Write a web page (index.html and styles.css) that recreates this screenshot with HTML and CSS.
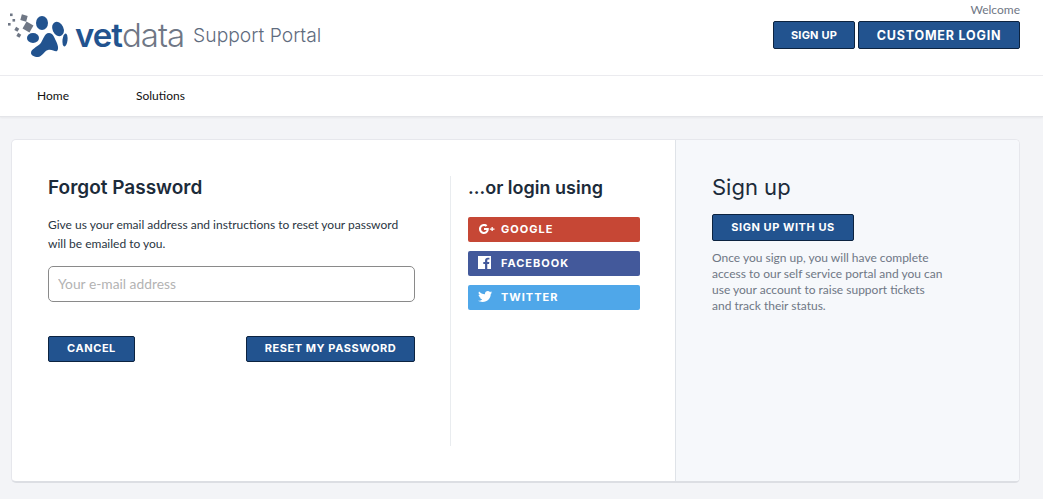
FILE: index.html
```html
<!DOCTYPE html>
<html>
<head lang="en">
  <meta charset="UTF-8">
  <title>Support Portal</title>
  <link rel="stylesheet" href="styles.css">
</head>
<body>
<div class="header">
  <div class="brand">
    <svg class="paw" width="62" height="48" viewBox="0 0 62 48">
      <g fill="#6f7785">
        <rect x="14" y="3" width="6" height="6" transform="rotate(15 17 6)"/>
        <rect x="3" y="1.500" width="2.600" height="2.600"/>
        <rect x="5.500" y="7" width="2.600" height="2.600"/>
        <rect x="1" y="11" width="2.600" height="2.600"/>
        <rect x="17" y="11" width="8" height="8" transform="rotate(30 21 15)"/>
        <rect x="8" y="15.500" width="3.600" height="3.600" transform="rotate(30 9.800 17.300)"/>
        <rect x="10" y="21.500" width="3.600" height="3.600" transform="rotate(30 11.800 23.300)"/>
      </g>
      <g fill="#22538f">
        <ellipse cx="35" cy="11" rx="6" ry="7"/>
        <ellipse cx="51" cy="17" rx="5.500" ry="7.500" transform="rotate(-25 51 17)"/>
        <ellipse cx="58" cy="28" rx="2.500" ry="6.500" transform="rotate(6 58 28)"/>
        <ellipse cx="26" cy="26" rx="6" ry="5"/>
        <path d="M42 21c4 0 5 4 7 8 2 4 3 8 1 10-2 1-5-2-9-1-4 1-6 7-10 7-4 0-7-2-7-4 0-4 6-6 9-9 3-3 4-11 9-11z"/>
      </g>
    </svg>
    <span class="logo-word"><b>vet</b>data</span>
    <span class="portal">Support Portal</span>
  </div>
  <div class="account">
    <div class="welcome">Welcome</div>
    <div class="account-btns">
      <a class="btn btn-small" href="#">SIGN UP</a>
      <a class="btn btn-large" href="#">CUSTOMER LOGIN</a>
    </div>
  </div>
</div>

<ul class="nav">
  <li><a href="#">Home</a></li>
  <li><a href="#">Solutions</a></li>
</ul>

<div class="card">
  <div class="main">
    <div class="forgot">
      <h2>Forgot Password</h2>
      <p>Give us your email address and instructions to reset your password will be emailed to you.</p>
      <input class="email" type="text" placeholder="Your e-mail address">
      <div class="form-btns">
        <a class="btn btn-cancel" href="#">CANCEL</a>
        <a class="btn btn-reset" href="#">RESET MY PASSWORD</a>
      </div>
    </div>
    <div class="social">
      <h2>…or login using</h2>
      <a class="soc google" href="#">
        <svg width="18" height="12" viewBox="0 0 18 12" preserveAspectRatio="xMinYMid"><path fill="#fff" d="M6 1c1.500 0 2.600.5 3.400 1.300L7.800 3.800C7.400 3.400 6.800 3.100 6 3.100 4.400 3.100 3.100 4.400 3.100 6S4.400 8.900 6 8.900c1.500 0 2.300-.8 2.600-1.900H6V5h4.800c.2 2.900-1.300 6-4.800 6-2.800 0-5-2.200-5-5s2.200-5 5-5z"/><path fill="#fff" d="M13.500 4.700h1.300V6h1.700v1.300h-1.700v1.300h-1.300V7.300h-1.700V6h1.700z" transform="translate(0 -.6)"/></svg>
        GOOGLE
      </a>
      <a class="soc facebook" href="#">
        <svg width="18" height="13" viewBox="0 0 14 14" preserveAspectRatio="xMinYMid"><path fill="#fff" d="M0 0h14v14h-4V8.600h1.900l.3-2.200H10V5c0-.7.200-1.100 1.100-1.100h1.200v-2C12 1.900 11.400 1.800 10.500 1.800 8.800 1.800 7.600 2.900 7.600 4.800v1.600H5.700v2.200h1.900V14H0z"/></svg>
        FACEBOOK
      </a>
      <a class="soc twitter" href="#">
        <svg width="18" height="11" viewBox="0 0 18 14" preserveAspectRatio="xMinYMid"><path fill="#fff" d="M18 1.700c-.7.300-1.400.5-2.100.6.800-.5 1.300-1.200 1.600-2-.7.400-1.500.7-2.300.9C14.500.4 13.500 0 12.500 0c-2 0-3.700 1.600-3.700 3.700 0 .3 0 .6.100.8C5.800 4.300 3.100 2.800 1.300.6.900 1.200.800 1.800.800 2.500c0 1.300.7 2.400 1.600 3-.6 0-1.200-.2-1.700-.5 0 1.800 1.300 3.300 3 3.600-.6.200-1.100.2-1.700.1.500 1.500 1.800 2.500 3.400 2.600C4 13 2 13.600 0 13.400 1.600 14.400 3.600 15 5.700 15 12.500 15 16.200 9.400 16.200 4.500v-.5c.7-.6 1.300-1.300 1.800-2.300z" transform="scale(1 .93)"/></svg>
        TWITTER
      </a>
    </div>
  </div>
  <div class="aside">
    <h3>Sign up</h3>
    <a class="btn btn-signup" href="#">SIGN UP WITH US</a>
    <p>Once you sign up, you will have complete access to our self service portal and you can use your account to raise support tickets and track their status.</p>
  </div>
</div>
</body>
</html>
```

FILE: styles.css
```css
* {
  margin: 0;
  padding: 0;
  box-sizing: border-box;
}

ul {
  list-style: none;
}

a {
  text-decoration: none;
}

body {
  background-color: #f3f4f7;
  font-family: Lato, "Noto Sans", sans-serif;
  overflow: hidden;
}

.header {
  height: 76px;
  background-color: #fff;
  border-bottom: 1px solid #ebebef;
  display: flex;
  justify-content: space-between;
  padding-right: 23px;
}

.brand {
  display: flex;
  align-items: flex-start;
  padding: 12px 0 0 7px;
}

.paw {
  flex: none;
}

.logo-word {
  margin: 3px 0 0 6px;
  font-family: Inter, sans-serif;
  font-size: 33px;
  font-weight: 300;
  line-height: 40px;
  letter-spacing: -1px;
  color: #6f7785;
}

.logo-word b {
  font-weight: 600;
  color: #22538f;
}

.portal {
  margin: 10px 0 0 9px;
  font-family: Inter, sans-serif;
  font-size: 19.300px;
  font-weight: 300;
  line-height: 26px;
  color: #5f6c7e;
}

.account {
  display: flex;
  flex-direction: column;
  align-items: flex-end;
  padding-top: 1px;
}

.welcome {
  font-size: 12px;
  line-height: 17px;
  color: #6f7785;
  margin-bottom: 3px;
}

.account-btns {
  display: flex;
  gap: 3px;
}

.btn {
  display: flex;
  align-items: center;
  justify-content: center;
  padding-bottom: 2px;
  background-color: #22538f;
  border: 1px solid #0c2340;
  border-radius: 2px;
  color: #fff;
  font-family: Inter, sans-serif;
  font-weight: 700;
  font-size: 11px;
  letter-spacing: .55px;
}

.btn-small {
  width: 82px;
  height: 28px;
  padding-bottom: 0;
  letter-spacing: .2px;
}

.btn-large {
  width: 162px;
  height: 28px;
  padding-bottom: 0;
  font-size: 12.500px;
  letter-spacing: .8px;
}

.nav {
  height: 41px;
  background-color: #fff;
  border-bottom: 1px solid #e4e5e9;
  box-shadow: 0 1px 2px rgba(0, 0, 0, .05);
  display: flex;
  gap: 67px;
  padding-left: 37px;
}

.nav a {
  display: block;
  font-size: 12px;
  line-height: 40px;
  color: #111;
}

.card {
  width: 1009px;
  height: 344px;
  margin: 22px 0 0 11px;
  background-color: #fff;
  border: 1px solid #e6e7ec;
  border-bottom: 2px solid #dcdee3;
  border-radius: 5px;
  display: flex;
  overflow: hidden;
}

.main {
  width: 663px;
  flex: none;
  display: flex;
  padding: 36px 0 35px 36px;
}

.forgot {
  width: 367px;
  flex: none;
}

h2 {
  font-family: Inter, sans-serif;
  font-size: 19px;
  font-weight: 600;
  line-height: 24px;
  color: #1c2b3a;
}

.forgot p {
  margin-top: 15px;
  font-size: 12px;
  line-height: 19px;
  color: #2a3542;
}

.email {
  display: block;
  width: 100%;
  height: 36px;
  margin-top: 13px;
  padding: 0 9px 2px;
  border: 1px solid #8a8a8a;
  border-radius: 5px;
  font-family: Lato, sans-serif;
  font-size: 13.800px;
  background-color: #fff;
}

.email::placeholder {
  color: #b3b3b3;
  opacity: 1;
}

.form-btns {
  display: flex;
  justify-content: space-between;
  margin-top: 34px;
}

.btn-cancel {
  width: 87px;
  height: 26px;
}

.btn-reset {
  width: 169px;
  height: 26px;
}

.social {
  width: 226px;
  margin-left: 35px;
  padding-left: 17px;
  border-left: 1px solid #e9ecef;
}

.social h2 {
  font-size: 18px;
  margin-bottom: 17px;
}

.soc {
  display: flex;
  align-items: center;
  gap: 5px;
  width: 172px;
  height: 25px;
  margin-bottom: 9px;
  padding: 0 0 2px 10px;
  border-radius: 2px;
  color: #fff;
  font-family: Inter, sans-serif;
  font-weight: 700;
  font-size: 11px;
  letter-spacing: 1px;
}

.soc svg {
  flex: none;
}

.google {
  background-color: #c64735;
}

.facebook {
  background-color: #43599b;
}

.twitter {
  background-color: #4fa7e9;
}

.aside {
  flex: 1;
  background-color: #f6f8fb;
  border-left: 1px solid #dfe3e8;
  padding: 33px 36px 0 36px;
}

h3 {
  font-family: Inter, sans-serif;
  font-size: 22px;
  font-weight: 400;
  line-height: 28px;
  color: #1c2b3a;
}

.btn-signup {
  width: 142px;
  height: 27px;
  margin-top: 13px;
}

.aside p {
  width: 232px;
  margin-top: 9px;
  font-size: 12px;
  line-height: 16px;
  color: #6f7785;
}
```
